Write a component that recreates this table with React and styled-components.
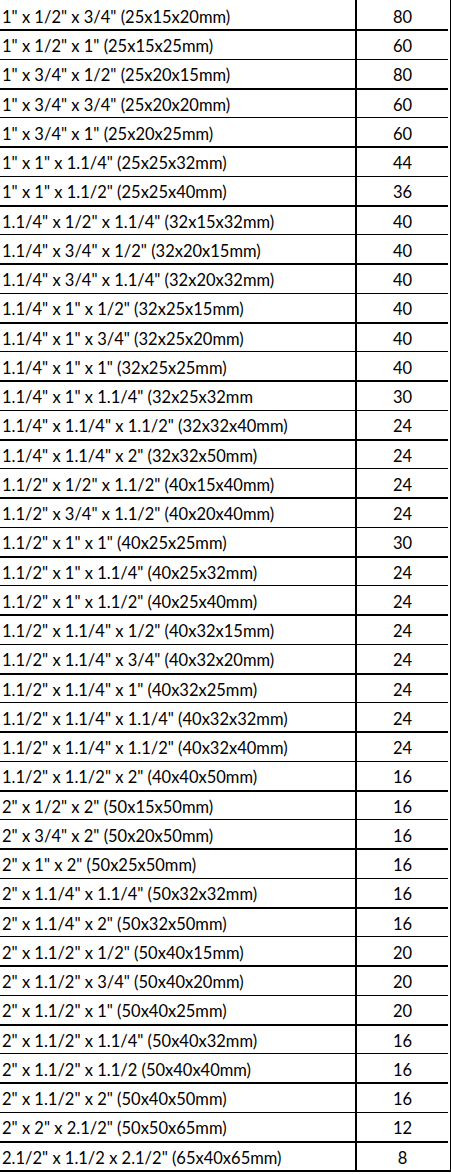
import { Fragment } from "react";
import styled, { createGlobalStyle } from "styled-components";

const rows = [
  ['1" x 1/2" x 3/4" (25x15x20mm)', 80],
  ['1" x 1/2" x 1" (25x15x25mm)', 60],
  ['1" x 3/4" x 1/2" (25x20x15mm)', 80],
  ['1" x 3/4" x 3/4" (25x20x20mm)', 60],
  ['1" x 3/4" x 1" (25x20x25mm)', 60],
  ['1" x 1" x 1.1/4" (25x25x32mm)', 44],
  ['1" x 1" x 1.1/2" (25x25x40mm)', 36],
  ['1.1/4" x 1/2" x 1.1/4" (32x15x32mm)', 40],
  ['1.1/4" x 3/4" x 1/2" (32x20x15mm)', 40],
  ['1.1/4" x 3/4" x 1.1/4" (32x20x32mm)', 40],
  ['1.1/4" x 1" x 1/2" (32x25x15mm)', 40],
  ['1.1/4" x 1" x 3/4" (32x25x20mm)', 40],
  ['1.1/4" x 1" x 1" (32x25x25mm)', 40],
  ['1.1/4" x 1" x 1.1/4" (32x25x32mm', 30],
  ['1.1/4" x 1.1/4" x 1.1/2" (32x32x40mm)', 24],
  ['1.1/4" x 1.1/4" x 2" (32x32x50mm)', 24],
  ['1.1/2" x 1/2" x 1.1/2" (40x15x40mm)', 24],
  ['1.1/2" x 3/4" x 1.1/2" (40x20x40mm)', 24],
  ['1.1/2" x 1" x 1" (40x25x25mm)', 30],
  ['1.1/2" x 1" x 1.1/4" (40x25x32mm)', 24],
  ['1.1/2" x 1" x 1.1/2" (40x25x40mm)', 24],
  ['1.1/2" x 1.1/4" x 1/2" (40x32x15mm)', 24],
  ['1.1/2" x 1.1/4" x 3/4" (40x32x20mm)', 24],
  ['1.1/2" x 1.1/4" x 1" (40x32x25mm)', 24],
  ['1.1/2" x 1.1/4" x 1.1/4" (40x32x32mm)', 24],
  ['1.1/2" x 1.1/4" x 1.1/2" (40x32x40mm)', 24],
  ['1.1/2" x 1.1/2" x 2" (40x40x50mm)', 16],
  ['2" x 1/2" x 2" (50x15x50mm)', 16],
  ['2" x 3/4" x 2" (50x20x50mm)', 16],
  ['2" x 1" x 2" (50x25x50mm)', 16],
  ['2" x 1.1/4" x 1.1/4" (50x32x32mm)', 16],
  ['2" x 1.1/4" x 2" (50x32x50mm)', 16],
  ['2" x 1.1/2" x 1/2" (50x40x15mm)', 20],
  ['2" x 1.1/2" x 3/4" (50x40x20mm)', 20],
  ['2" x 1.1/2" x 1" (50x40x25mm)', 20],
  ['2" x 1.1/2" x 1.1/4" (50x40x32mm)', 16],
  ['2" x 1.1/2" x 1.1/2 (50x40x40mm)', 16],
  ['2" x 1.1/2" x 2" (50x40x50mm)', 16],
  ['2" x 2" x 2.1/2" (50x50x65mm)', 12],
  ['2.1/2" x 1.1/2 x 2.1/2" (65x40x65mm)', 8],
];

const GlobalStyle = createGlobalStyle`
  body {
    margin: 0;
    background: #fff;
  }
`;

const Table = styled.div`
  width: 450px;
  display: grid;
  grid-template-columns: 355px 93px;
  border-right: 2px solid #000;
  border-bottom: 2px solid #000;
  font-family: Lato, "Open Sans", sans-serif;
  font-size: 16.5px;
  color: #000;
  background: #fff;
`;

const Cell = styled.div`
  height: 29.25px;
  box-sizing: border-box;
  display: flex;
  align-items: flex-end;
  justify-content: ${(p) => (p.$num ? "center" : "flex-start")};
  padding: 0 0 4px ${(p) => (p.$num ? "0" : "2px")};
  border-top: ${(p) => (p.$first ? "none" : p.$thick ? "2px" : "1px")} solid #000;
  border-left: ${(p) => (p.$num ? "2px solid #000" : "none")};
  white-space: nowrap;
  line-height: 1;
`;

export default function App() {
  return (
    <>
      <GlobalStyle />
      <Table>
        {rows.map(([size, qty], i) => (
          <Fragment key={i}>
            <Cell $first={i === 0} $thick={i % 2 === 1}>
              {size}
            </Cell>
            <Cell $num $first={i === 0} $thick={i % 2 === 1}>
              {qty}
            </Cell>
          </Fragment>
        ))}
      </Table>
    </>
  );
}
